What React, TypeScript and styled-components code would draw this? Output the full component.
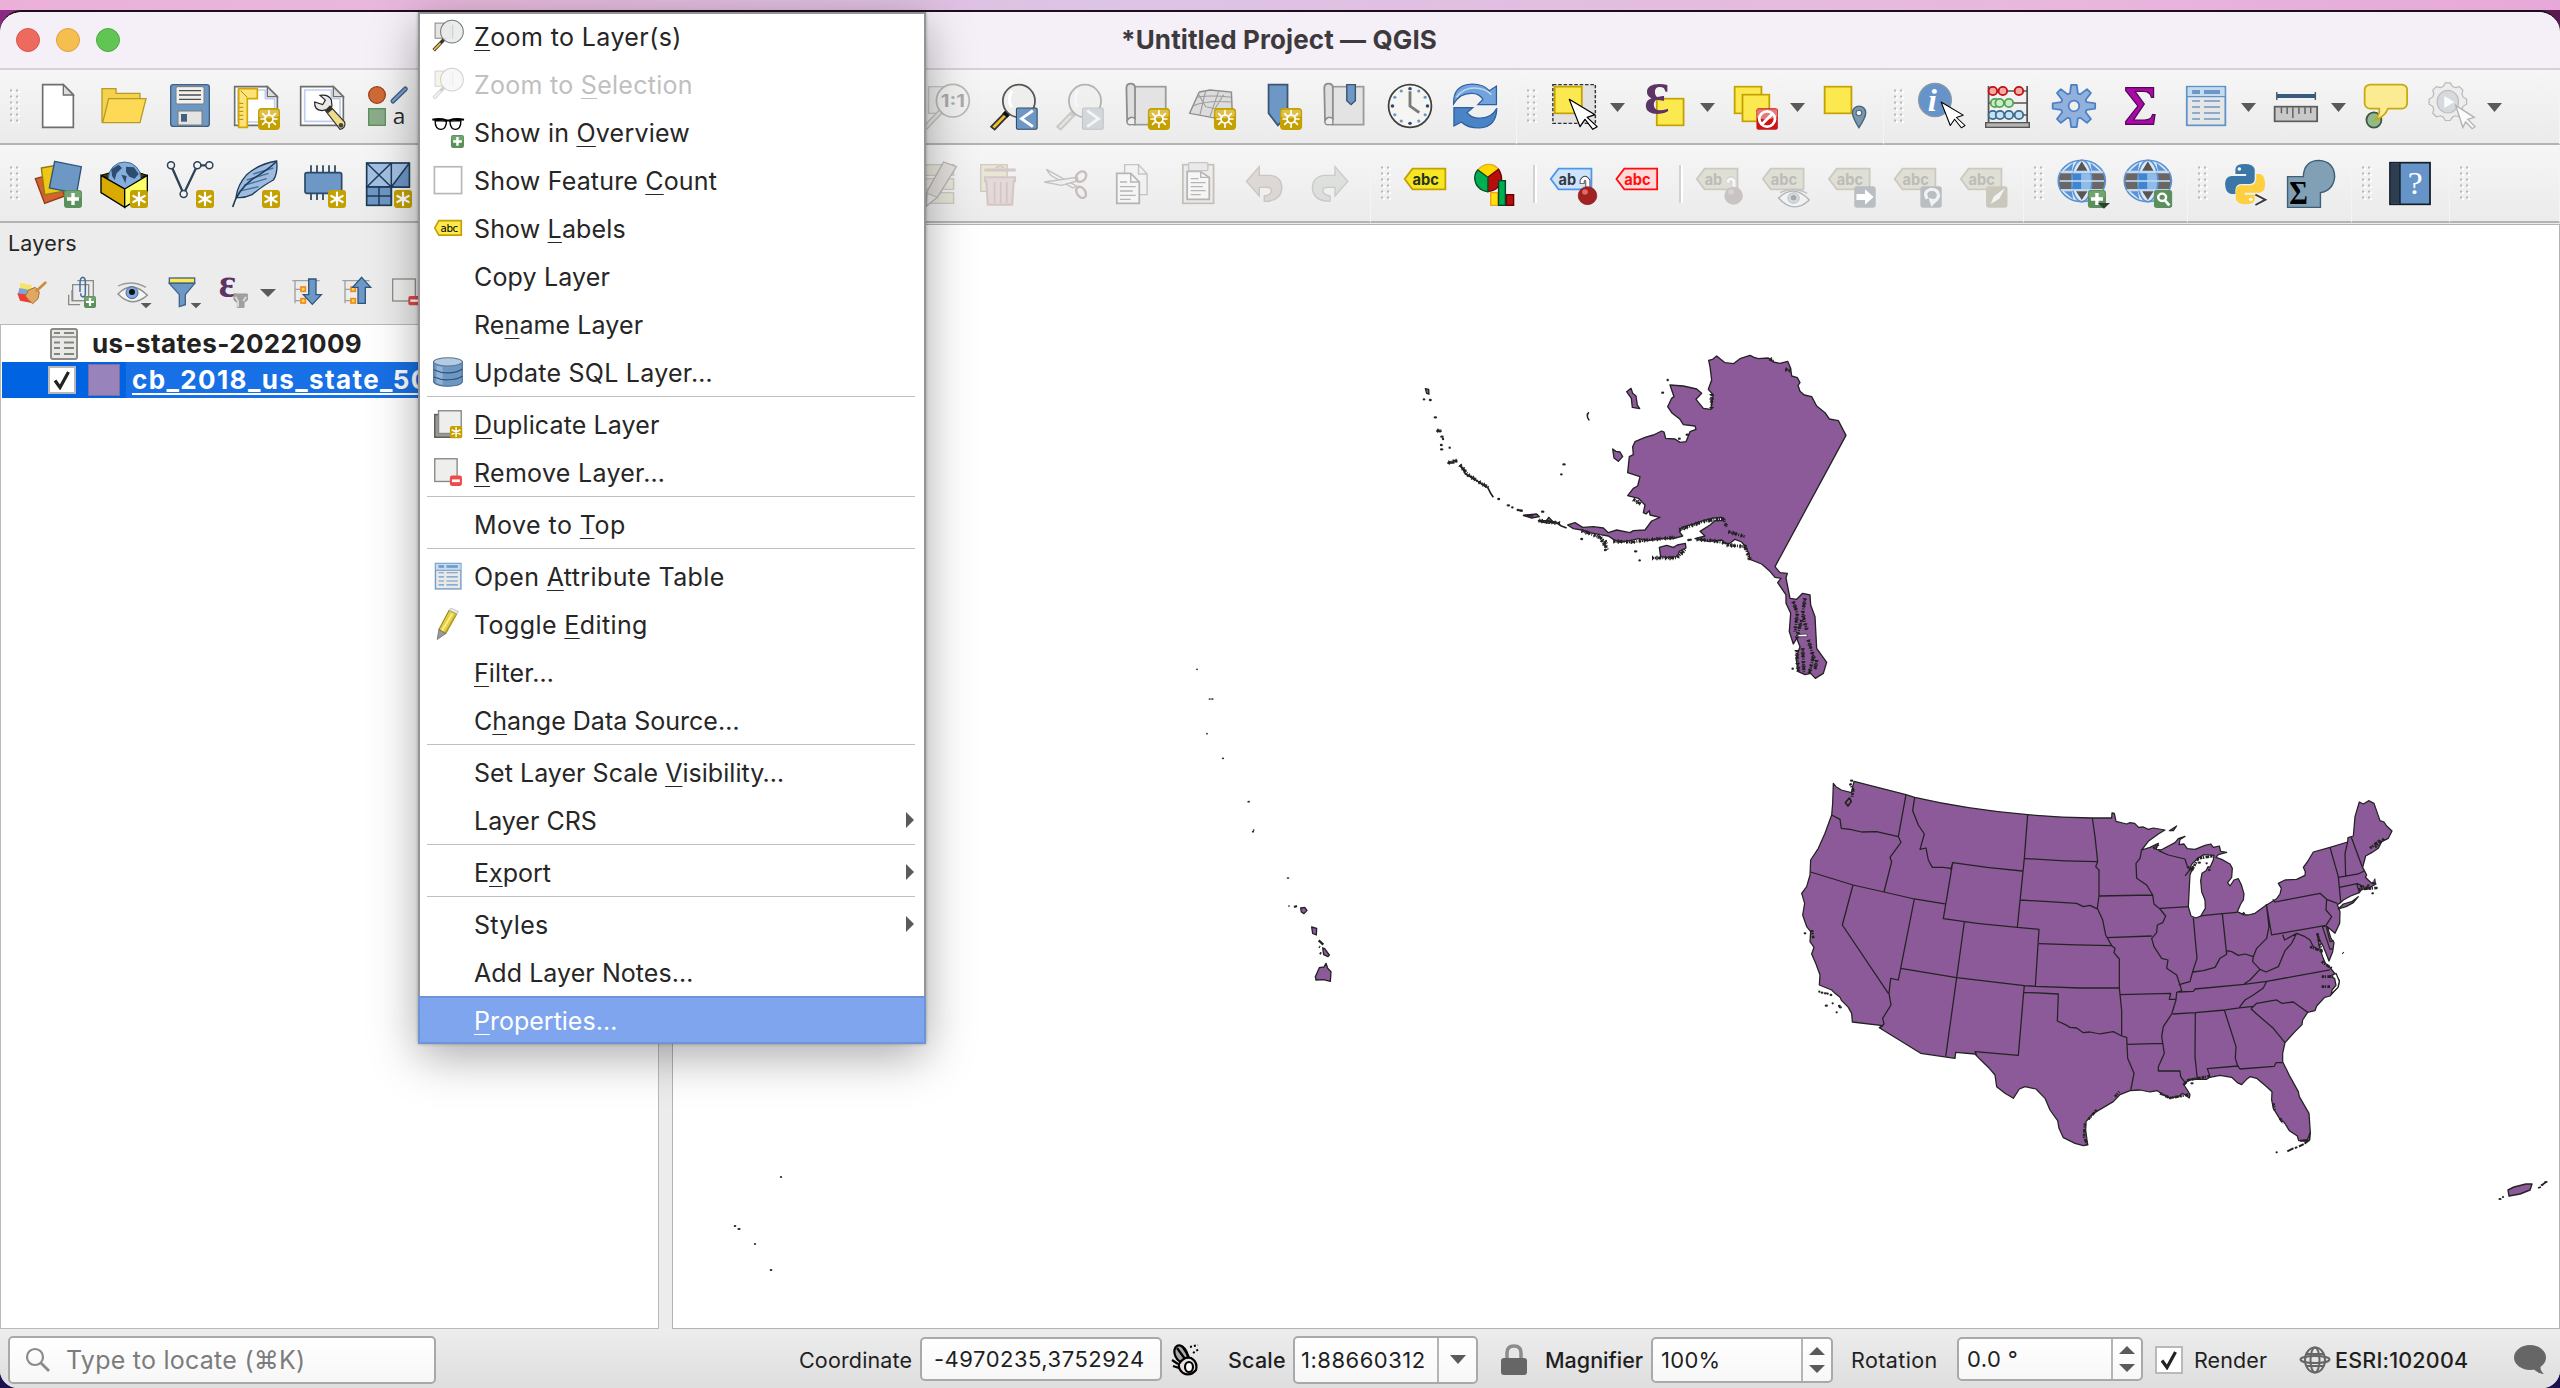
import React from "react";
import styled, { createGlobalStyle } from "styled-components";

const Global = createGlobalStyle`
  html, body { margin: 0; padding: 0; overflow: hidden; }
  body {
    width: 2560px; height: 1388px;
    font-family: Inter, "Liberation Sans", sans-serif;
    color: #262626;
  }
  * { box-sizing: border-box; }
  svg { display: block; }
`;

/* ---------- frame ---------- */

const Desktop = styled.div`
  position: relative;
  width: 2560px;
  height: 1388px;
  overflow: hidden;
  display: flex;
  flex-direction: column;
  padding-top: 10px;
  background:
    linear-gradient(90deg, #ebb0d8 0, #e6b9dc 500px, #dcc4e4 1100px, #e8b8de 2000px, #e6a8d8 100%) 0 0 / 100% 10px no-repeat,
    linear-gradient(90deg, #8a2a82, #5a1c50) 0 0 / 100% 60% no-repeat,
    #1a1250;
`;

const Window = styled.div`
  flex: 1;
  display: flex;
  flex-direction: column;
  border-top: 2px solid #1e0e1c;
  border-radius: 22px 22px 18px 18px;
  overflow: hidden;
  background: #ececec;
`;

const TitleBar = styled.header`
  height: 58px;
  display: flex;
  align-items: center;
  padding-left: 16px;
  background: #f5eff7;
  border-bottom: 2px solid #d5d2d6;
  border-radius: 20px 20px 0 0;
`;

const Light = styled.span<{ $fill: string; $rim: string }>`
  width: 24px;
  height: 24px;
  margin-right: 16px;
  border-radius: 50%;
  background: ${(p) => p.$fill};
  border: 1px solid ${(p) => p.$rim};
`;

const Title = styled.h1`
  margin: 0 138px 2px 0;
  flex: 1;
  text-align: center;
  font-size: 26px;
  font-weight: 700;
  letter-spacing: 0.1px;
  color: #3d3a3e;
`;

/* ---------- toolbars ---------- */

const Bar = styled.div<{ $h: number; $pad: number }>`
  height: ${(p) => p.$h}px;
  display: flex;
  & > * { padding-top: ${(p) => p.$pad}px; }
`;

const Section = styled.div<{ $w: number }>`
  width: ${(p) => p.$w}px;
  flex: none;
  display: flex;
  align-items: center;
  background: linear-gradient(#f6f6f6, #ebebeb);
  border-bottom: 2px solid #b3b3b3;
  border-right: 1px solid #f4f4f4;
`;

const Slot = styled.span`
  width: 66px;
  flex: none;
  display: flex;
  justify-content: center;
`;

const Overflow = styled.span<{ $w: number }>`
  width: ${(p) => p.$w}px;
  flex: none;
`;

const CaretBox = styled.span<{ $w?: number }>`
  width: ${(p) => p.$w ?? 24}px;
  flex: none;
  display: flex;
`;

const Divider = styled.span`
  width: 4px;
  height: 38px;
  margin: 0 5px;
  flex: none;
  border-left: 2px solid #d2d2d2;
  border-right: 2px solid #fff;
`;

const GripBox = styled.span`
  width: 25px;
  flex: none;
  padding-left: 10px;
`;

const Grip = () => (
  <GripBox>
    <svg width="12" height="36">
      {[0, 1, 2, 3, 4, 5].map((r) =>
        [0, 6].map((x) => (
          <g key={`${r}-${x}`}>
            <rect x={x + 2} y={r * 6 + 2} width="2" height="2" fill="#fff" />
            <rect x={x} y={r * 6 + 0.5} width="2" height="2" fill="#b8b8b8" />
          </g>
        ))
      )}
    </svg>
  </GripBox>
);

const Caret = ({ w }: { w?: number }) => (
  <CaretBox $w={w}>
    <svg width="18" height="9">
      <path d="M2 0H17L9.500 9Z" fill="#5a5a58" />
    </svg>
  </CaretBox>
);

type Sheet = "a" | "b" | "c" | "d";
const sheets: Record<Sheet, [number, number]> = {
  a: [0, 3],
  b: [920, 2.8],
  c: [1460, 2.8],
  d: [2000, 2.8],
};

/* One 48px toolbar glyph; artwork is drawn on a shared sheet and windowed by viewBox. */
const Glyph = ({ x, row, s, dim, children }: { x: number; row: 1 | 2; s: Sheet; dim?: number; children: React.ReactNode }) => {
  const [o, k] = sheets[s];
  const top = s === "a" ? (row === 1 ? 249 : 480) : row === 1 ? 69 : 300;
  return (
    <Slot>
      <svg
        width="48"
        height="48"
        overflow="visible"
        opacity={dim ?? 1}
        viewBox={`${(x - 24 - o) * k} ${top} ${48 * k} 144`}
        preserveAspectRatio="none"
      >
        {children}
      </svg>
    </Slot>
  );
};

const Star = ({ x, y, s = 54 }: { x: number; y: number; s?: number }) => (
  <g transform={`translate(${x} ${y}) scale(${s / 54})`}>
    <rect width="54" height="54" rx="9" fill="#c4a000" />
    <g stroke="#fff" strokeWidth="6.5" strokeLinecap="round">
      <path d="M27 8V46M10 18L44 36M44 18L10 36" />
    </g>
  </g>
);

const Sun = ({ x, y, w = 62 }: { x: number; y: number; w?: number }) => (
  <g transform={`translate(${x} ${y}) scale(${w / 66} 1)`}>
    <rect width="66" height="66" rx="11" fill="#c4a000" />
    <path d="M4 12Q4 5 12 5H54Q62 5 62 12V24Q33 36 4 26Z" fill="#dcc04a" />
    <g stroke="#fff" strokeWidth="5" strokeLinecap="round">
      <path d="M33 8V20M33 46V58M9 33H20M46 33H57M14 17L23 26M43 40L52 49M52 17L43 26M23 40L14 49" />
    </g>
    <circle cx="33" cy="33" r="12" fill="none" stroke="#fff" strokeWidth="5" />
  </g>
);

const Plus = ({ x, y, s = 54 }: { x: number; y: number; s?: number }) => (
  <g transform={`translate(${x} ${y}) scale(${s / 54})`}>
    <rect width="54" height="54" rx="9" fill="#5b8f5b" />
    <rect x="3" y="3" width="48" height="22" rx="7" fill="#72a472" />
    <path d="M27 9V45M9 27H45" stroke="#fff" strokeWidth="10" />
  </g>
);

const Pointer = ({ x, y }: { x: number; y: number }) => (
  <path
    transform={`translate(${x} ${y})`}
    d="M0 0L72 46L50 54L78 82L66 90L44 60L30 82Z"
    fill="#fff"
    stroke="#000"
    strokeWidth="3.5"
    strokeLinejoin="round"
  />
);

const Tag = ({ x, text, fill, edge, ink }: { x: number; text: string; fill: string; edge: string; ink: string }) => (
  <g>
    <path d={`M${x + 2} 357L${x + 24} 326H${x + 116}V388H${x + 24}Z`} fill={fill} stroke={edge} strokeWidth="5" />
    <text x={x + 24} y="374" fontSize="46" fontWeight="700" fill={ink} textLength={text.length * 24.6} lengthAdjust="spacingAndGlyphs" fontFamily="Inter, sans-serif">
      {text}
    </text>
  </g>
);

const Globe = ({ c }: { c: number }) => (
  <g>
    <ellipse cx={c} cy="363" rx="66" ry="62" fill="#dce8f5" />
    <path d={`M${c - 62} 340H${c - 28}V388H${c - 62}Q${c - 68} 363 ${c - 62} 340Z M${c + 28} 340H${c + 62}Q${c + 68} 363 ${c + 62} 388H${c + 28}Z`} fill="#6a6664" />
    <path d={`M${c - 26} 340H${c + 26}V388H${c - 26}Z`} fill="#3f86d0" />
    <path d={`M${c - 2} 340H${c + 26}V388H${c - 2}Z`} fill="#8fbbe8" />
    <path d={`M${c - 16} 332L${c} 304L${c + 16} 332Z M${c - 16} 394L${c} 420L${c + 16} 394Z`} fill="#5a5654" />
    <path d={`M${c - 50} 332L${c - 24} 308L${c - 28} 332Z M${c + 50} 332L${c + 24} 308L${c + 28} 332Z M${c - 50} 394L${c - 24} 418L${c - 28} 394Z`} fill="#5a94d6" />
    <g fill="none" stroke="#5b93d4" strokeWidth="4.5">
      <ellipse cx={c} cy="363" rx="66" ry="62" />
      <ellipse cx={c} cy="363" rx="28" ry="62" />
    </g>
    <g fill="none" stroke="#eef5fc" strokeWidth="5">
      <path d={`M${c - 60} 336H${c + 60}M${c - 62} 363H${c + 62}M${c - 58} 390H${c + 58}`} />
    </g>
    <g fill="none" stroke="#7fabdf" strokeWidth="2">
      <path d={`M${c - 60} 336H${c + 60}M${c - 62} 363H${c + 62}M${c - 58} 390H${c + 58}`} />
    </g>
  </g>
);

const Lens = ({ x, grey }: { x: number; grey?: boolean }) => (
  <g transform={`translate(${x} 0)`}>
    <path d="M46 154L4 200L14 209L54 164Z" fill={grey ? "#d8d4c4" : "#f3bf2f"} stroke={grey ? "#8f8f8f" : "#333"} strokeWidth="5" />
    <path d="M40 156L54 168" stroke={grey ? "#999" : "#111"} strokeWidth="14" />
    <ellipse cx="82" cy="123" rx="45" ry="49" fill="#eeeeec" stroke="#555753" strokeWidth="5" />
    <path d="M62 92Q48 120 62 142" stroke="#fff" strokeWidth="8" fill="none" />
  </g>
);

/* ---------- toolbar artwork ---------- */

const RowOneLeft = () => (
  <>
    <Glyph x={58} row={1} s="a">
      <path d="M128 254H190L220 284V382H128Z" fill="#fff" stroke="#6e6e6e" strokeWidth="5" />
      <path d="M190 254V285H220Z" fill="#ddd" stroke="#6e6e6e" strokeWidth="4" />
    </Glyph>
    <Glyph x={124} row={1} s="a">
      <path d="M306 368V266H348V280H420V310" fill="#f6d24a" stroke="#b59a2c" strokeWidth="4" />
      <path d="M308 368L326 296H438L420 368Z" fill="#fdd955" stroke="#b59a2c" strokeWidth="4" />
    </Glyph>
    <Glyph x={190} row={1} s="a">
      <rect x="512" y="254" width="116" height="125" rx="8" fill="#6d97c4" stroke="#41607f" strokeWidth="4" />
      <rect x="528" y="260" width="84" height="52" rx="5" fill="#f1f1ef" stroke="#7a7a78" strokeWidth="3" />
      <path d="M537 272H603M537 285H603M537 298H603" stroke="#4e4e4c" strokeWidth="4" />
      <rect x="534" y="333" width="72" height="42" fill="#e4e4e2" stroke="#7a7a78" strokeWidth="3" />
      <rect x="543" y="342" width="18" height="23" fill="#41607f" />
    </Glyph>
    <Glyph x={256} row={1} s="a">
      <path d="M704 260H802L832 290V376H704Z" fill="#fff" stroke="#6e6e6e" strokeWidth="5" />
      <path d="M714 270H796V296H824V366H714Z" fill="none" stroke="#bdcff0" strokeWidth="5" />
      <path d="M802 260V290H832Z" fill="#ddd" stroke="#6e6e6e" strokeWidth="4" />
      <path d="M716 266H772V296H742V382H716Z" fill="#fbe37a" stroke="#d3a600" strokeWidth="5" />
      <path d="M718 310H730M718 322H730M718 334H730M718 346H730M718 358H730M722 272L742 292" stroke="#b08a00" strokeWidth="3" />
      <Sun x={774} y={324} w={66} />
    </Glyph>
    <Glyph x={322} row={1} s="a">
      <path d="M902 260H1000L1030 290V376H902Z" fill="#fff" stroke="#6e6e6e" strokeWidth="5" />
      <path d="M914 270H994V296H1020V364H914Z" fill="none" stroke="#bdcff0" strokeWidth="5" />
      <path d="M1000 260V290H1030Z" fill="#ddd" stroke="#6e6e6e" strokeWidth="4" />
      <path d="M960 286L976 300L968 314L944 306Q942 330 966 332L984 328L996 318L994 300Q986 282 960 286Z" fill="#e8e8e6" stroke="#222" strokeWidth="3.5" />
      <path d="M976 332L990 318L1034 366Q1038 384 1020 388Z" fill="#efdc8a" stroke="#333" strokeWidth="3.5" />
      <path d="M976 332L990 318L998 328L984 340Z" fill="#333" />
      <circle cx="1023" cy="376" r="7" fill="#444" />
    </Glyph>
    <Glyph x={388} row={1} s="a">
      <circle cx="1131" cy="285" r="25" fill="#cf6a36" stroke="#9c4318" strokeWidth="4" />
      <path d="M1179 303L1216 267" stroke="#3f6288" strokeWidth="15" strokeLinecap="round" />
      <path d="M1179 303L1216 267" stroke="#7ba0cc" strokeWidth="7" strokeLinecap="round" />
      <rect x="1106" y="326" width="50" height="50" fill="#8aac8a" stroke="#5c915c" strokeWidth="4" />
      <text x="1178" y="372" fontSize="68" fill="#2c2c2c" fontFamily="'Open Sans', sans-serif">a</text>
    </Glyph>
  </>
);

const RowOneView = () => (
  <>
    <Glyph x={948} row={1} s="b" dim={0.4}>
      <rect x="24" y="80" width="70" height="80" fill="#e4e4e2" stroke="#888" strokeWidth="4" />
      <path d="M60 152L14 204" stroke="#777" strokeWidth="16" />
      <path d="M60 152L14 204" stroke="#d8d4c4" strokeWidth="8" />
      <ellipse cx="92" cy="122" rx="46" ry="49" fill="#f2f2f0" stroke="#666" strokeWidth="5" />
      <text x="58" y="140" fontSize="50" fontWeight="700" fill="#444" textLength="68" lengthAdjust="spacingAndGlyphs">1:1</text>
    </Glyph>
    <Glyph x={1014} row={1} s="b">
      <Lens x={195} />
      <rect x="270" y="144" width="58" height="64" rx="4" fill="#6d97c4" stroke="#34485e" strokeWidth="3" />
      <path d="M316 152L284 176L316 200" fill="none" stroke="#fff" strokeWidth="8" />
    </Glyph>
    <Glyph x={1080} row={1} s="b" dim={0.4}>
      <Lens x={380} grey />
      <rect x="455" y="144" width="58" height="64" rx="4" fill="#a9b4c0" stroke="#7b8794" strokeWidth="3" />
      <path d="M468 152L500 176L468 200" fill="none" stroke="#fff" strokeWidth="8" />
    </Glyph>
    <Glyph x={1146} row={1} s="b">
      <rect x="600" y="80" width="88" height="114" fill="#e3e3e3" stroke="#9a9a9a" strokeWidth="5" />
      <path d="M578 84Q578 71 590 71Q602 71 602 84V176Q590 168 580 180Z" fill="#dedede" stroke="#8d8d8d" strokeWidth="5" />
      <path d="M580 182Q588 166 602 176V194H592Q578 196 580 182Z" fill="#eee" stroke="#8d8d8d" strokeWidth="4" />
      <Sun x={638} y={144} />
    </Glyph>
    <Glyph x={1212} row={1} s="b">
      <path d="M782 96L812 90L872 96L874 150L834 176L755 160L770 124Z" fill="#dcdcdc" stroke="#8d8d8d" strokeWidth="4" />
      <path d="M764 138Q800 120 874 126M776 112Q810 104 872 112M800 92L784 164M836 94L812 170M778 100L800 140L826 146L850 104" fill="none" stroke="#9b9b9b" strokeWidth="3" />
      <Sun x={823} y={144} />
    </Glyph>
    <Glyph x={1278} row={1} s="b">
      <path d="M976 74H1029V168L1002 196L976 160Z" fill="#6d97c4" stroke="#3b5673" strokeWidth="5" />
      <Sun x={1008} y={144} />
    </Glyph>
    <Glyph x={1344} row={1} s="b">
      <rect x="1154" y="80" width="88" height="114" fill="#e3e3e3" stroke="#9a9a9a" strokeWidth="5" />
      <path d="M1132 84Q1132 71 1144 71Q1156 71 1156 84V176Q1144 168 1134 180Z" fill="#dedede" stroke="#8d8d8d" strokeWidth="5" />
      <path d="M1134 182Q1142 166 1156 176V194H1146Q1132 196 1134 182Z" fill="#eee" stroke="#8d8d8d" strokeWidth="4" />
      <path d="M1195 74H1219V122L1207 134L1195 122Z" fill="#6d97c4" stroke="#3b5673" strokeWidth="4" />
    </Glyph>
    <Glyph x={1410} row={1} s="b">
      <ellipse cx="1372" cy="138" rx="60" ry="64" fill="#f5f5f3" stroke="#3f3f3d" strokeWidth="5" />
      {Array.from({ length: 12 }, (_, i) => (
        <circle key={i} cx={1372 + 49 * Math.sin((i * Math.PI) / 6)} cy={138 - 52 * Math.cos((i * Math.PI) / 6)} r={i % 3 ? 4.5 : 5} fill={i % 3 ? "#6d97c4" : "#2f4b69"} />
      ))}
      <path d="M1372 94V138L1398 158" fill="none" stroke="#7b7b79" strokeWidth="8" />
    </Glyph>
    <Glyph x={1476} row={1} s="c">
      <path d="M-18 132Q-20 74 34 72Q66 72 82 92L102 78V134H50L64 118Q54 100 34 100Q0 98 -18 132Z" fill="#72a3dc" stroke="#2d5f9e" strokeWidth="3.5" />
      <path d="M103 145Q102 202 54 204Q20 204 4 186L-17 198V143H36L20 158Q32 176 54 174Q88 176 103 145Z" fill="#4a84c6" stroke="#2d5f9e" strokeWidth="3.5" />
      <path d="M-10 112Q8 84 40 84Q70 84 88 104" fill="none" stroke="#bdd6f2" strokeWidth="5" />
    </Glyph>
  </>
);

const RowOneSelect = () => (
  <>
    <Glyph x={1575} row={1} s="c">
      <rect x="260" y="74" width="119" height="116" fill="#e2e2e2" stroke="#333" strokeWidth="4" strokeDasharray="10 5" />
      <rect x="265" y="80" width="76" height="80" fill="#fce94f" stroke="#c4a000" strokeWidth="5" />
      <Pointer x={306} y={118} />
    </Glyph>
    <Caret />
    <Glyph x={1665} row={1} s="c">
      <rect x="551" y="116" width="75" height="80" fill="#fce94f" stroke="#c4a000" strokeWidth="5" />
      <text x="516" y="160" fontSize="184" fontWeight="700" fill="#5c3566" textLength="70" lengthAdjust="spacingAndGlyphs" fontFamily="'Liberation Serif', serif">ε</text>
    </Glyph>
    <Caret />
    <Glyph x={1755} row={1} s="c">
      <rect x="769" y="80" width="75" height="80" fill="#fce94f" stroke="#c4a000" strokeWidth="5" />
      <rect x="791" y="104" width="75" height="80" fill="#fce94f" stroke="#c4a000" strokeWidth="5" />
      <rect x="830" y="145" width="60" height="64" rx="6" fill="#cc1414" />
      <path d="M832 148H888V170Q860 184 832 174Z" fill="#e67a7a" />
      <ellipse cx="860" cy="177" rx="22" ry="23" fill="none" stroke="#fff" strokeWidth="8" />
      <path d="M846 192L874 162" stroke="#fff" strokeWidth="8" />
    </Glyph>
    <Caret />
    <Glyph x={1845} row={1} s="c">
      <rect x="1021" y="80" width="75" height="80" fill="#fce94f" stroke="#c4a000" strokeWidth="5" />
      <path d="M1117 203Q1099 172 1099 158A18 19 0 0 1 1136 158Q1136 172 1117 203Z" fill="#7b97ad" stroke="#49657b" strokeWidth="4" />
      <circle cx="1117" cy="159" r="8" fill="#f2f2f2" stroke="#49657b" strokeWidth="3" />
    </Glyph>
  </>
);

const gearPath = (cx: number, cy: number, rx: number, ry: number, inner: number, teeth = 8) => {
  const pts: string[] = [];
  for (let i = 0; i < teeth; i++) {
    const base = (i * 2 * Math.PI) / teeth;
    [[-0.3, inner], [-0.13, 1], [0.13, 1], [0.3, inner]].forEach(([d, r]) => {
      pts.push(`${(cx + rx * r * Math.sin(base + d)).toFixed(1)},${(cy - ry * r * Math.cos(base + d)).toFixed(1)}`);
    });
  }
  return `M${pts.join("L")}Z`;
};

const Bead = ({ x, y, f, e }: { x: number; y: number; f: string; e: string }) => (
  <ellipse cx={x} cy={y} rx="12" ry="12.5" fill={f} stroke={e} strokeWidth="5" />
);

const RowOneTools = () => (
  <>
    <Glyph x={1942} row={1} s="c">
      <ellipse cx="1330" cy="120" rx="46" ry="50" fill="#6694c8" stroke="#8f98a3" strokeWidth="3.5" />
      <text x="1310" y="152" fontSize="92" fontStyle="italic" fontWeight="700" fill="#fff" fontFamily="'Liberation Serif', serif">i</text>
      <g transform="translate(1347 126) scale(.86)"><Pointer x={0} y={0} /></g>
    </Glyph>
    <Glyph x={2008} row={1} s="d">
      <path d="M-32 78V190M76 78V190M-32 93H76M-32 129H76M-32 165H76" stroke="#555" strokeWidth="5" />
      <Bead x={8} y={93} f="#f7a8a8" e="#c01010" />
      <Bead x={-20} y={93} f="#f7a8a8" e="#c01010" />
      <Bead x={53} y={93} f="#f7a8a8" e="#c01010" />
      <Bead x={-14} y={129} f="#c5efc5" e="#55a055" />
      <Bead x={-1} y={129} f="#c5efc5" e="#55a055" />
      <Bead x={25} y={129} f="#c5efc5" e="#55a055" />
      <Bead x={-20} y={165} f="#c3e2f3" e="#3b6a8c" />
      <Bead x={25} y={165} f="#c3e2f3" e="#3b6a8c" />
      <Bead x={53} y={165} f="#c3e2f3" e="#3b6a8c" />
      <Bead x={0} y={165} f="#c3e2f3" e="#3b6a8c" />
      <rect x="-40" y="188" width="122" height="14" fill="#b5b5b3" stroke="#555" strokeWidth="4" />
    </Glyph>
    <Glyph x={2074} row={1} s="d">
      <path d={gearPath(207, 138, 60, 64, 0.62)} fill="#92b0dc" stroke="#4a80c4" strokeWidth="5" strokeLinejoin="round" />
      <ellipse cx="207" cy="138" rx="15" ry="16" fill="#f0f0f0" stroke="#4a80c4" strokeWidth="5" />
    </Glyph>
    <Glyph x={2140} row={1} s="d">
      <path d="M352 83H430V112H424Q420 94 402 94H378L404 132L374 180H404Q424 180 427 164H434L430 193H352V184L386 138L352 92Z" fill="#a90aa9" stroke="#4f0a50" strokeWidth="3.5" />
    </Glyph>
    <Glyph x={2206} row={1} s="d">
      <rect x="523" y="80" width="108" height="116" fill="#e6e6e6" stroke="#5f93c8" strokeWidth="5" />
      <rect x="526" y="82" width="102" height="26" fill="#c4dcf0" />
      <path d="M523 110H631" stroke="#5f93c8" strokeWidth="4" />
      <path d="M538 96H560M571 96H616" stroke="#6d97c4" strokeWidth="12" />
      <path d="M538 123H560M571 123H616M538 141H560M571 141H616M538 159H560M571 159H616M538 177H560M571 177H616" stroke="#6d97c4" strokeWidth="5" />
    </Glyph>
    <Caret />
    <Glyph x={2296} row={1} s="d">
      <path d="M775 108H883" stroke="#3b5b7d" strokeWidth="12" />
      <path d="M775 96V120M883 96V120" stroke="#3b5b7d" strokeWidth="4" />
      <rect x="769" y="140" width="119" height="44" fill="#c9c9c9" stroke="#5c5c5a" strokeWidth="5" />
      <path d="M788 142V160M804 142V162M820 142V174M837 142V162M854 142V162M870 142V160" stroke="#5c5c5a" strokeWidth="4" />
    </Glyph>
    <Caret />
    <Glyph x={2386} row={1} s="d">
      <ellipse cx="1047" cy="180" rx="21" ry="23" fill="#8dbb8d" stroke="#45543f" strokeWidth="5" />
      <path d="M1036 74H1126Q1140 76 1140 90V128Q1140 144 1126 146H1086Q1078 170 1050 180Q1064 164 1062 146H1036Q1021 144 1021 128V90Q1021 76 1036 74Z" fill="#fbec94" stroke="#c9a912" strokeWidth="5" />
    </Glyph>
    <Glyph x={2452} row={1} s="d" dim={0.75}>
      <path d={gearPath(1254, 125, 53, 57, 0.84)} fill="#ececec" stroke="#a8a8a8" strokeWidth="3.5" />
      <ellipse cx="1254" cy="125" rx="30" ry="34" fill="#cdd3d8" stroke="#aab0b4" strokeWidth="3.5" />
      <path d="M1244 108L1272 126L1244 144Z" fill="#fff" />
      <path d="M1276 136L1328 172L1310 178L1330 200L1322 206L1304 186L1296 202Z" fill="#fff" stroke="#a0a0a0" strokeWidth="4" />
    </Glyph>
    <Caret />
  </>
);

const RowTwoLeft = () => (
  <>
    <Glyph x={58} row={2} s="a">
      <path d="M106 536L168 520L194 588L134 610Z" fill="#d5622f" stroke="#8c3d17" strokeWidth="4" />
      <path d="M124 504L190 492L200 572L134 584Z" fill="#edc713" stroke="#8d7a18" strokeWidth="4" />
      <path d="M164 484L244 500L230 580L148 564Z" fill="#6d97c4" stroke="#2f5478" strokeWidth="4" />
      <Plus x={192} y={570} />
    </Glyph>
    <Glyph x={124} row={2} s="a">
      <path d="M303 526L372 552L442 526L375 505Z" fill="#4a3c00" stroke="#000" strokeWidth="3" />
      <circle cx="374" cy="535" r="49" fill="#86aedb" stroke="#39689c" strokeWidth="3" />
      <path d="M334 508L356 494L366 504L350 520L344 540L336 528ZM378 500L402 502L416 522L404 536L388 530L378 516ZM364 524L380 528L376 550Z" fill="#2d4c72" />
      <path d="M303 526L374 567V622L303 578Z" fill="#d9aa00" stroke="#000" strokeWidth="4" />
      <path d="M374 567L442 526V580L374 622Z" fill="#ffff66" stroke="#000" strokeWidth="4" />
      <Star x={390} y={570} />
    </Glyph>
    <Glyph x={190} row={2} s="a">
      <path d="M513 496L551 582L592 496H628" fill="none" stroke="#2d4257" strokeWidth="7" />
      {[[513, 496], [551, 582], [592, 496], [628, 496]].map(([x, y]) => (
        <circle key={x} cx={x} cy={y} r="10.5" fill="#f4f4f4" stroke="#2d4257" strokeWidth="4.5" />
      ))}
      <Star x={588} y={570} />
    </Glyph>
    <Glyph x={256} row={2} s="a">
      <path d="M708 592Q712 556 740 524Q776 492 830 483Q834 520 820 540Q790 556 756 584Q730 596 708 592Z" fill="#9dbce0" stroke="#1f3b57" strokeWidth="4" />
      <path d="M740 540L806 520M732 556L800 536M760 522L820 504M724 572L776 560" stroke="#44709c" strokeWidth="4" />
      <path d="M698 621Q712 572 756 538Q800 512 828 486" fill="none" stroke="#1f3b57" strokeWidth="5" />
      <Star x={786} y={570} />
    </Glyph>
    <Glyph x={322} row={2} s="a">
      <path d="M933 496V518M951 496V518M969 496V518M987 496V518M1005 496V518M933 580V600M951 580V600M969 580V600" stroke="#263f5a" strokeWidth="5" />
      <rect x="915" y="518" width="110" height="62" rx="6" fill="#6d97c4" stroke="#294869" strokeWidth="5" />
      <Star x={984} y={570} />
    </Glyph>
    <Glyph x={388} row={2} s="a">
      <rect x="1100" y="489" width="128" height="72" fill="#a2c0e4" stroke="#1f3a57" strokeWidth="5" />
      <path d="M1228 489V561H1174Z" fill="#6d97c4" />
      <rect x="1100" y="561" width="74" height="55" fill="#6d97c4" stroke="#1f3a57" strokeWidth="5" />
      <path d="M1228 489V561H1174V616M1174 489V561M1100 489L1174 561M1174 489L1100 561M1228 489L1174 561M1137 561V616M1100 588H1174" fill="none" stroke="#1f3a57" strokeWidth="4.5" />
      <Star x={1182} y={570} />
    </Glyph>
  </>
);

const RowTwoEdit = () => (
  <>
    <Glyph x={934} row={2} s="b" dim={0.42}>
      <path d="M-10 314H94V346H-10ZM-10 356H94V388H-10ZM-10 398H94V430H-10Z" fill="#d9d5b8" stroke="#98957c" strokeWidth="4" />
      <path d="M66 306L102 320L50 410L18 438L18 398Z" fill="#cfc6c0" stroke="#6e6662" strokeWidth="4" />
      <path d="M18 438L20 400L48 412Z" fill="#e9e9e9" stroke="#6e6662" strokeWidth="3" />
    </Glyph>
    <Glyph x={1000} row={2} s="b" dim={0.42}>
      <rect x="170" y="314" width="74" height="80" fill="#dcd6b0" stroke="#a09a78" strokeWidth="4" />
      <path d="M180 330H268" stroke="#b08f8f" strokeWidth="9" />
      <path d="M212 324Q224 314 236 324" fill="none" stroke="#b08f8f" strokeWidth="5" />
      <path d="M182 352H266V364H262L258 434H190L186 364H182Z" fill="#d5bcbc" stroke="#b08f8f" strokeWidth="6" />
      <path d="M209 366V430M226 366V430M243 366V430" stroke="#b08f8f" strokeWidth="5" />
    </Glyph>
    <Glyph x={1066} row={2} s="b" dim={0.45}>
      <path d="M354 328L438 378L428 384L366 346Z" fill="#eee" stroke="#8a8a8a" strokeWidth="4" />
      <path d="M348 366L440 352L442 362L396 376Z" fill="#eee" stroke="#8a8a8a" strokeWidth="4" />
      <ellipse cx="451" cy="350" rx="13" ry="17" fill="none" stroke="#9c7f7f" strokeWidth="7" transform="rotate(35 451 350)" />
      <ellipse cx="451" cy="397" rx="12" ry="18" fill="none" stroke="#9c7f7f" strokeWidth="7" transform="rotate(-30 451 397)" />
    </Glyph>
    <Glyph x={1132} row={2} s="b" dim={0.42}>
      <path d="M573 314H612L636 342V404H573Z" fill="#f4f4f4" stroke="#888" strokeWidth="4" />
      <path d="M612 314V342H636" fill="none" stroke="#888" strokeWidth="4" />
      <path d="M551 340H590L614 366V430H551Z" fill="#fff" stroke="#666" strokeWidth="5" />
      <path d="M590 340V366H614M560 366H580M560 380H604M560 393H596M560 406H604M560 418H590" fill="none" stroke="#666" strokeWidth="4" />
    </Glyph>
    <Glyph x={1198} row={2} s="b" dim={0.42}>
      <rect x="736" y="314" width="86" height="116" fill="#eae6dc" stroke="#8a8070" strokeWidth="5" />
      <path d="M748 334H784L810 352V418H748Z" fill="#fff" stroke="#666" strokeWidth="5" />
      <path d="M786 330V352H810M758 356H780M758 368H800M758 380H792M758 392H800M758 404H786" fill="none" stroke="#666" strokeWidth="4" />
      <rect x="752" y="308" width="54" height="24" rx="4" fill="#ddd" stroke="#888" strokeWidth="4" />
    </Glyph>
    <Glyph x={1264} row={2} s="b" dim={0.42}>
      <path d="M914 364L950 320V346H980Q1014 350 1013 386Q1010 424 964 424V408Q986 404 984 390Q982 380 964 382H950V408Z" fill="#c3b8b0" stroke="#9a8d84" strokeWidth="4" />
    </Glyph>
    <Glyph x={1330} row={2} s="b" dim={0.42}>
      <path d="M1198 364L1162 320V346H1132Q1098 350 1099 386Q1102 424 1148 424V408Q1126 404 1128 390Q1130 380 1148 382H1162V408Z" fill="#c6cac4" stroke="#939a92" strokeWidth="4" />
    </Glyph>
  </>
);

const DimTag = ({ x, text }: { x: number; text: string }) => <Tag x={x} text={text} fill="#e0dfd6" edge="#cbcac0" ink="#bcbcb6" />;

const RowTwoLabels = () => (
  <>
    <Glyph x={1429} row={2} s="b">
      <Tag x={1355} text="abc" fill="#f7e624" edge="#c4a000" ink="#26341f" />
    </Glyph>
    <Glyph x={1495} row={2} s="c">
      <path d="M78 352L50 330Q64 313 80 313Q98 313 108 328Z" fill="#ffd800" stroke="#e8a81c" strokeWidth="4" />
      <path d="M78 352L108 328Q118 345 116 362Q108 392 78 395Z" fill="#b80d0d" stroke="#700" strokeWidth="4" />
      <path d="M78 352V395Q44 390 41 354Q42 338 50 330Z" fill="#00b050" stroke="#08542c" strokeWidth="4" />
      <rect x="86" y="398" width="20" height="38" fill="#ffdf10" stroke="#f0a818" strokeWidth="4" />
      <rect x="130" y="404" width="20" height="32" fill="#b80d0d" stroke="#600" strokeWidth="4" />
      <rect x="108" y="362" width="19" height="74" fill="#00b050" stroke="#08442c" strokeWidth="4" />
    </Glyph>
    <Divider />
    <Glyph x={1575} row={2} s="c">
      <Tag x={252} text="ab" fill="#cfe4fb" edge="#4c97ee" ink="#333b42" />
      <path d="M342 372V362Q350 346 358 362V384" fill="none" stroke="#444" strokeWidth="14" />
      <path d="M342 370V362Q350 348 358 362V384" fill="none" stroke="#fff" strokeWidth="9" />
      <ellipse cx="357" cy="407" rx="26" ry="27" fill="#a22222" stroke="#7d1616" strokeWidth="2" />
      <circle cx="350" cy="396" r="8" fill="#e06a6a" />
    </Glyph>
    <Glyph x={1641} row={2} s="c">
      <Tag x={436} text="abc" fill="#ffd9d9" edge="#ff0d0d" ink="#ff1010" />
    </Glyph>
    <Divider />
    <Glyph x={1721} row={2} s="c">
      <DimTag x={661} text="ab" />
      <path d="M751 370V362Q759 348 767 362V384" fill="none" stroke="#cfcfcf" strokeWidth="14" />
      <path d="M751 368V362Q759 350 767 362V384" fill="none" stroke="#f6f6f6" strokeWidth="9" />
      <ellipse cx="766" cy="407" rx="26" ry="27" fill="#c9c3c3" />
      <circle cx="759" cy="396" r="8" fill="#d8d4d4" />
    </Glyph>
    <Glyph x={1787} row={2} s="c">
      <DimTag x={846} text="abc" />
      <path d="M892 414Q934 370 978 420Q934 464 892 414Z" fill="#f2f2f2" stroke="#b4b4b4" strokeWidth="4" />
      <path d="M896 398Q934 378 972 400" fill="none" stroke="#c0c0c0" strokeWidth="4" />
      <circle cx="934" cy="414" r="16" fill="#d3dae0" stroke="#bcc4ca" strokeWidth="3" />
      <circle cx="934" cy="413" r="8" fill="#a8a8a8" />
    </Glyph>
    <Glyph x={1853} row={2} s="c">
      <DimTag x={1031} text="abc" />
      <rect x="1104" y="379" width="60" height="64" rx="8" fill="#b9bec2" />
      <path d="M1110 402H1134V388L1158 411L1134 434V420H1110Z" fill="#fff" />
    </Glyph>
    <Glyph x={1919} row={2} s="c">
      <DimTag x={1215} text="abc" />
      <rect x="1289" y="379" width="60" height="64" rx="8" fill="#b9bec2" />
      <path d="M1308 416Q1296 394 1318 388Q1340 388 1340 408Q1336 420 1326 424" fill="none" stroke="#f2f2f2" strokeWidth="9" />
      <path d="M1312 414L1338 420L1320 440Z" fill="#f2f2f2" />
    </Glyph>
    <Glyph x={1985} row={2} s="c">
      <DimTag x={1400} text="abc" />
      <rect x="1473" y="379" width="60" height="64" rx="8" fill="#cac7bd" />
      <path d="M1486 432L1494 410L1526 384L1510 416Z" fill="#f4f4f4" />
    </Glyph>
  </>
);

const RowTwoWeb = () => (
  <>
    <Glyph x={2082} row={2} s="d">
      <Globe c={229} />
      <g transform="translate(246 390) scale(.94 1)"><Plus x={0} y={0} /></g>
      <path d="M274 429H308L291 446Z" fill="#2f4030" />
    </Glyph>
    <Glyph x={2148} row={2} s="d">
      <Globe c={414} />
      <rect x="431" y="390" width="51" height="54" rx="8" fill="#5b8f5b" />
      <circle cx="454" cy="412" r="11" fill="none" stroke="#fff" strokeWidth="7" />
      <path d="M461 420L474 436" stroke="#fff" strokeWidth="8" />
    </Glyph>
  </>
);

const RowTwoPlugins = () => (
  <>
    <Glyph x={2247} row={2} s="d">
      <path d="M688 312Q662 312 662 328V342H692V348H650Q634 350 633 372Q634 400 650 402H662V388Q664 372 680 372H702Q716 370 716 356V328Q712 312 688 312Z" fill="#3a76a8" />
      <path d="M690 433Q716 433 716 418V404H688V398H730Q745 396 745 372Q744 344 730 342H720V358Q718 376 702 376H678Q664 378 663 390V418Q668 433 690 433Z" fill="#fecf3f" />
      <circle cx="673" cy="327" r="5" fill="#fff" />
      <circle cx="705" cy="418" r="5" fill="#fff" />
      <path d="M718 404L746 419L718 435" fill="none" stroke="#f3f3f3" strokeWidth="11" />
      <path d="M718 404L746 419L718 435" fill="none" stroke="#3a3a3a" strokeWidth="5.5" />
    </Glyph>
    <Glyph x={2313} row={2} s="d">
      <path d="M808 350H852Q854 302 896 301Q938 304 940 350Q936 392 900 398V442H808Z" fill="#819fb5" stroke="#3f5f78" strokeWidth="4" />
      <text x="813" y="432" fontSize="100" fontWeight="700" fill="#000" textLength="52" lengthAdjust="spacingAndGlyphs" fontFamily="'Liberation Serif', serif">Σ</text>
    </Glyph>
  </>
);

const RowTwoHelp = () => (
  <Glyph x={2410} row={2} s="d">
    <rect x="1092" y="308" width="112" height="125" fill="#6694c8" stroke="#151e28" strokeWidth="5" />
    <rect x="1094" y="310" width="26" height="121" fill="#2c3e50" />
    <path d="M1120 308V433" stroke="#151e28" strokeWidth="4" />
    <text x="1142" y="402" fontSize="94" fill="#fff" fontFamily="'Liberation Serif', serif">?</text>
  </Glyph>
);

/* ---------- layers panel ---------- */

const Body = styled.main`
  height: 1106px;
  display: flex;
`;

const Dock = styled.section`
  width: 659px;
  flex: none;
  display: flex;
  flex-direction: column;
`;

const DockTitle = styled.h2`
  margin: 0;
  height: 42px;
  padding: 5px 0 0 8px;
  font-size: 21.5px;
  line-height: 30px;
  font-weight: 400;
  letter-spacing: 0.2px;
`;

const DockTools = styled.div`
  height: 59px;
  padding: 12px 0 0 16px;
  display: flex;
  align-items: flex-start;
`;

const DockTool = styled.span<{ $gap?: number }>`
  width: 32px;
  margin-right: ${(p) => p.$gap ?? 18}px;
  flex: none;
`;

const LayerIcon = ({ c, gap, children }: { c: number; gap?: number; children: React.ReactNode }) => (
  <DockTool $gap={gap}>
    <svg width="32" height="32" overflow="visible" viewBox={`${c * 3 - 48} 831 96 96`}>
      {children}
    </svg>
  </DockTool>
);

const TreeArrow = ({ x, up }: { x: number; up?: boolean }) => (
  <>
    <path d={`M${x} 842H${x + 82}M${x + 8} 842V910M${x + 8} 868H${x + 24}M${x + 8} 902H${x + 24}`} stroke="#a0a09e" strokeWidth="4" />
    <rect x={x + 26} y="861" width="13" height="13" fill="#ffd95a" stroke="#f08a16" strokeWidth="5" />
    <rect x={x + 26} y="896" width="13" height="13" fill="#ffd95a" stroke="#f08a16" strokeWidth="5" />
    {up ? (
      <path d={`M${x + 58} 832L${x + 85} 862H${x + 69}V910H${x + 47}V862H${x + 31}Z`} fill="#6d97c4" stroke="#2f5680" strokeWidth="4" />
    ) : (
      <path d={`M${x + 49} 837H${x + 71}V884H${x + 87}L${x + 60} 913L${x + 33} 884H${x + 49}Z`} fill="#6d97c4" stroke="#2f5680" strokeWidth="4" />
    )}
  </>
);

const Tree = styled.ul`
  flex: 1;
  margin: 0;
  padding: 1px 0 0 1px;
  list-style: none;
  background: #fff;
  border: 1px solid #b9b9b9;
`;

const TreeRow = styled.li<{ $on?: boolean }>`
  height: 36px;
  display: flex;
  align-items: center;
  background: ${(p) => (p.$on ? "#0063e1" : "#fff")};
`;

const TreeName = styled.span<{ $on?: boolean }>`
  flex: 1;
  height: 36px;
  line-height: 36px;
  padding-left: 6px;
  white-space: nowrap;
  overflow: hidden;
  font-size: 26px;
  font-weight: 700;
  letter-spacing: ${(p) => (p.$on ? "1.4px" : "0.4px")};
  color: ${(p) => (p.$on ? "#fff" : "#222")};
  background: ${(p) => (p.$on ? "#1870e6" : "transparent")};
  text-decoration: ${(p) => (p.$on ? "underline" : "none")};
  text-decoration-thickness: 2px;
  text-underline-offset: 4px;
  text-decoration-skip-ink: none;
`;

const CheckBox = styled.span<{ $ml?: number }>`
  width: 28px;
  height: 28px;
  flex: none;
  margin-left: ${(p) => p.$ml ?? 0}px;
  display: flex;
  align-items: center;
  justify-content: center;
  background: #fff;
  border: 2px solid #b9b9b9;
`;

const Swatch = styled.span`
  width: 32px;
  height: 32px;
  margin: 0 6px 0 12px;
  background: #9983bb;
  border: 1px solid #7f6ca0;
`;

const TableMark = styled.span`
  margin: 0 8px 0 48px;
`;

const Check = () => (
  <svg width="18" height="20" viewBox="0 0 18 20">
    <path d="M2 10.5L7 17.5L15.5 2" fill="none" stroke="#222" strokeWidth="3.2" />
  </svg>
);

/* ---------- map ---------- */

const Splitter = styled.div`
  width: 13px;
  flex: none;
`;

const Canvas = styled.section`
  flex: 1;
  margin-top: 1px;
  background: #fff;
  border: 1px solid #b3b3b3;
`;

const ALASKA =
  "M926 91L938 88L950 78L962 88L975 98L1000 101L1020 86L1050 76L1062 82L1075 86L1105 84L1120 96L1140 100L1163 94L1172 115L1175 138L1192 143L1200 158L1194 166L1200 184L1213 195L1235 200L1250 228L1275 248L1288 267L1315 272L1338 316L1125 710L1140 728L1162 730L1158 744L1170 805L1190 808L1208 790L1230 795L1232 825L1245 860L1250 955L1280 997L1270 1030L1246 1045L1232 1030L1215 1034L1195 1025L1188 985L1200 950L1190 925L1180 942L1168 905L1172 850L1158 820L1158 795L1133 758L1143 745L1125 742L1108 722L1085 702L1050 688L1046 670L1036 650L1025 636L1005 628L990 640L975 640L965 630L950 632L925 634L885 626L915 618L900 604L930 585L945 572L970 572L965 562L940 564L910 572L880 582L845 592L838 605L848 618L820 626L780 626L745 632L715 626L690 632L660 636L640 628L625 618L600 614L570 608L545 600L520 596L503 585L525 578L548 592L580 590L610 594L625 608L650 600L690 608L700 602L735 600L755 573L780 562L750 555L748 542L738 552L730 548L735 525L715 505L683 497L700 475L713 468L720 440L683 428L688 380L700 374L698 350L705 335L735 322L760 315L785 303L792 306L797 325L825 327L840 337L858 335L870 305L888 298L885 288L850 284L840 268L815 248L803 230L815 205L822 200L810 165L850 168L890 177L905 190L888 208L910 235L933 238L936 210L940 195L925 178L935 150L930 110Z";

const ALASKA_ISLES =
  "M680 185L693 175L698 190L708 198L712 225L719 236L697 232L694 205ZM638 357L648 364L660 366L668 380L655 394L642 384ZM76 176L86 178L87 192L80 190ZM566 248Q558 258 567 270Q560 262 562 252ZM778 652L800 646L820 652L832 645L856 640L858 654L838 664L832 680L800 682L782 680ZM370 556L410 552L418 560L395 564ZM415 572L440 572L446 562L456 572L448 580L425 576Z";

const ALASKA_CHAIN = "M180 405L190 418L196 432L215 442L235 455L262 472M262 470L272 490L280 502M370 556L400 558M440 572L470 578L484 588L500 594M352 540L368 542";

const ALASKA_NOISE =
  "M180 405L205 435L235 455L268 474M545 602L600 622L622 640M640 634L700 636L740 630L830 622M890 628L940 632L980 640M985 605L1035 620M980 645L1035 650L1050 690M756 684L830 684L856 658M480 580L416 572M1180 815L1192 850L1185 905M1215 805L1208 850L1220 900M1205 870L1190 925M1190 960L1195 1025M1208 955L1212 1030M1225 930L1240 980L1228 1030M1250 990L1245 1020M605 630L625 662M935 192V236M838 600L910 574L970 566L980 590M700 508L722 522M112 302H124M146 398L172 392M1156 118L1172 122M1110 86L1120 94";

const alaskaDots: [number, number][] = [
  [72, 208], [91, 210], [106, 262], [112, 303], [120, 304], [126, 320], [129, 327], [124, 345], [125, 358], [149, 353], [146, 399], [156, 398], [168, 392],
  [296, 507], [325, 526], [337, 532], [354, 540], [363, 542], [803, 150], [788, 188], [492, 403], [484, 433], [545, 627], [707, 664], [719, 691],
  [616, 660], [428, 545], [872, 629], [838, 326], [862, 314], [1178, 1016], [866, 630],
];

const STATES_OUTLINE =
  "M160 70L168 80L184 90L214 98L218 82L222 64L378 104L404 112Q560 148 743 164Q840 172 937 174L995 174L996 159L1003 160L1008 184L1040 192L1050 188L1064 190L1076 202L1090 201L1105 208L1120 204L1155 210L1135 222L1105 244L1085 270L1110 262L1135 250L1128 268L1143 270L1185 248L1195 236L1215 229L1200 238L1197 254L1212 252L1222 266L1245 268L1275 256L1292 252L1300 262L1318 258L1322 274L1340 277L1315 284L1308 292L1325 298L1350 312L1357 325L1355 352L1343 368L1350 378L1362 360L1375 356L1384 374L1392 402L1390 420L1382 432L1372 455L1390 464L1405 465L1425 460L1455 438L1490 416L1500 402L1504 385L1495 370L1515 360L1550 358L1575 346L1576 335L1570 322L1582 306L1600 276L1650 262L1703 246L1704 233L1720 228L1725 170L1738 126L1750 132L1766 122L1782 130L1800 182L1812 186L1820 198L1836 213L1825 235L1805 245L1795 265L1775 278L1757 288L1748 322L1760 345L1756 352L1775 370L1788 372L1765 385L1745 388L1738 398L1712 408L1690 420L1682 428L1672 434L1680 455L1679 490L1665 520L1642 500L1653 535L1662 548L1658 575L1647 603L1638 580L1630 560L1618 538L1612 520L1618 560L1628 590L1636 610L1650 622L1665 642L1678 662L1675 680L1650 708L1634 712L1610 738L1605 752L1583 757L1568 780L1566 794L1545 815L1515 848L1508 880V905L1530 950L1555 995L1558 1010L1587 1060L1591 1118L1580 1144L1556 1142L1552 1128L1528 1112L1512 1086L1504 1084L1480 1045L1475 1020L1476 995L1460 980L1430 955L1410 950L1400 958L1385 974L1372 968L1355 952L1320 946L1290 952L1280 958L1250 957L1225 960L1212 975L1222 990L1230 1004L1228 1014L1208 1000L1195 1010L1168 1014L1150 1004L1132 992L1110 996L1080 990L1050 992L1020 1004L1000 1025L940 1060L918 1085L917 1110L923 1155L910 1157L885 1150L850 1133L837 1105L833 1082L810 1050L795 1015L768 987L735 980L718 987L700 1015L675 1000L650 980L645 945L628 925L600 898L585 882L527 877L525 895L422 880L298 803L308 797L217 786L215 760L205 742L185 722L180 712L165 700L155 690L118 675L120 645L108 612L95 582L102 562L90 545L92 515L80 500L68 465L74 430L65 400L80 380L90 345L92 300L115 265L135 220L155 165L158 130Z";

const STATE_LINES =
  "M155 165L180 178L184 205L210 208L245 216L290 215L355 230M378 104L355 230L363 247L330 292L335 305L312 396M92 336L219 375L312 396L403 417L495 432M219 375L187 495L325 700M403 417L362 625L355 660L332 655L327 700L333 735L308 775L312 792L300 803M362 625L530 653L733 677L766 679L900 684L1018 684M404 112L398 152L415 195L433 222L420 268L438 264L445 300L457 322L490 322L512 325M512 330L518 308Q620 324 727 333M518 308L490 476Q600 494 712 502L777 508L766 679M553 486L530 653L497 890M743 164L733 295L712 502M733 295Q840 304 953 305M722 420L890 430L910 440L930 436L955 448M937 174L945 230L953 305L947 320L957 330V408L952 445L968 480L977 525L995 557L1005 565L1002 578L1018 597V684L1025 752V828M777 551Q890 556 995 557M957 408L1118 405M980 533L1115 528M1085 268L1080 295L1068 310L1070 355L1100 375L1118 405L1122 432L1140 447L1157 468L1148 488L1132 495L1130 518L1115 535L1122 560L1145 595L1164 600L1160 625L1190 645L1200 675L1205 692L1190 697L1188 720L1175 762L1150 800L1145 830L1153 880L1135 920V933H1200L1202 950L1218 972M1140 445L1228 440M1136 272L1165 285L1215 297L1222 320M1240 474L1251 595L1238 635L1230 665L1210 670L1196 675M1245 471L1275 466L1327 461L1372 457M1327 461L1340 583M1238 636L1270 632L1305 622L1320 595L1340 583V572L1355 575L1375 586L1395 582L1420 590L1430 565L1460 535L1467 500L1459 432M1420 590L1418 605L1440 628L1410 660L1392 672M1196 696L1240 694L1245 687L1392 673L1460 664L1650 630M1020 704L1172 700L1168 718H1188M1178 762L1246 758L1335 750L1378 744L1420 739M1460 664L1450 684L1420 705L1395 720L1378 742M1413 746L1430 730L1490 720L1505 730L1540 726L1583 757M1413 746L1430 762L1480 805L1515 848M1246 758L1245 890L1252 957M1333 750L1368 860L1366 895L1373 918L1282 926L1290 950M1373 917L1380 927L1483 919L1488 908L1508 908M1043 853L1147 850M1025 828L1040 832L1043 895L1062 940L1052 992M731 697L835 702L832 783L856 794L870 802L890 804L910 818L930 816L960 822L1000 815L1025 828M733 677L731 697L715 886L585 875L590 886M1459 432L1475 525L1638 496M1478 418L1485 426L1620 400L1640 418L1672 430M1640 418L1638 450L1655 470L1638 496L1650 545L1662 543M1638 496L1628 502L1650 568L1658 566M1508 524L1514 540L1550 520L1575 530L1590 540L1600 560L1618 570M1440 628L1458 636L1495 620L1515 572L1535 550L1550 520M1650 262L1675 350L1682 425M1703 246L1695 280L1697 347M1714 232L1747 322M1675 352L1735 342L1752 333M1678 382L1732 371L1750 380M1730 371L1738 398";

const US_NOISE =
  "M210 70L220 90L216 110M96 510L100 535M1770 265L1800 240M1785 262L1812 236M1740 378L1770 385M1735 388L1790 384M1612 520L1626 580M1625 605L1655 625M1625 650H1660M1625 680H1650M1210 975L1225 960L1290 948M1140 1000L1170 1014L1225 1004M915 1090L912 1130L922 1155M925 1078L950 1050M1480 1030L1484 1050M1500 1075L1510 1090M1222 320L1236 330L1255 295L1300 288M1388 458L1396 465M1005 1010L1018 995M1690 580L1688 578M1590 560L1622 572M1120 266L1136 254";

const usDots: [number, number][] = [
  [118, 695], [126, 698], [136, 700], [143, 701], [153, 705], [139, 737], [158, 730], [178, 738], [181, 742], [170, 757], [75, 520], [215, 62],
  [1790, 384], [1778, 400], [1236, 970], [1490, 1177], [1765, 376], [1258, 308], [1280, 310], [1288, 330],
];

const seaDots: [number, number][] = [[781, 1177], [735, 1226], [739, 1229], [755, 1244], [771, 1270], [2500, 1199], [2503, 1197], [2542, 1185], [2546, 1182]];
const hawaiiDots: [number, number][] = [[111, 88], [149, 177], [157, 177], [141, 281], [189, 355], [266, 485], [281, 570], [279, 575], [384, 714], [387, 798]];

const Dots = ({ at, r }: { at: [number, number][]; r: number }) => (
  <g fill="#232323" stroke="none">
    {at.map(([x, y], i) => (
      <ellipse key={i} cx={x} cy={y} rx={r * (1 + (i % 3) * 0.25)} ry={r} />
    ))}
  </g>
);

const MapView = () => (
  <svg width="1885" height="1103" viewBox="673 225 1885 1103" fill="#8d5a99" stroke="#232323" strokeLinejoin="round">
    <g transform="translate(1400 330) scale(.33333)" strokeWidth="4">
      <path d={ALASKA} />
      <path d={ALASKA_ISLES} />
      <path d={ALASKA_CHAIN} fill="none" strokeWidth="5" />
      <path d={ALASKA_NOISE} fill="none" strokeWidth="8" strokeDasharray="7 2 4 4 11 3 3 4" />
      <path d={ALASKA_NOISE} fill="none" strokeWidth="13" strokeDasharray="3 10 4 6 2 14" />
      <path d="M1192 914L1220 912L1222 920L1196 920Z" fill="#fff" strokeWidth="2" />
      <Dots at={alaskaDots} r={3.6} />
    </g>
    <g transform="translate(1780 760) scale(.33333)" strokeWidth="3.8">
      <path d={STATES_OUTLINE} />
      <path d={STATE_LINES} fill="none" />
      <path
        d="M1216 346L1226 334L1236 312L1252 296L1272 284L1302 286L1300 300L1290 322L1284 320L1278 332L1266 340L1262 362L1265 395L1275 420L1276 445L1262 468L1248 474L1233 468L1225 440L1228 380L1230 345L1240 318Z"
        fill="#fff"
      />
      <path d="M1675 447L1690 432L1715 425L1735 410L1720 428L1698 440ZM1168 212L1190 198L1180 212ZM1775 368L1786 370L1784 356" />
      <path d="M1668 640L1678 664L1674 682L1654 702L1656 690L1668 676L1664 656L1650 648Z" fill="#fff" />
      <path d="M196 128L208 114L214 124L204 138Z" fill="none" strokeWidth="5" />
      <path d="M1590 1118L1588 1140L1572 1152L1556 1160L1538 1166L1522 1174M1560 1142L1582 1140" fill="none" strokeWidth="6" strokeDasharray="40 3 16 5 8 4" />
      <path d={US_NOISE} fill="none" strokeWidth="8" strokeDasharray="7 2 4 4 11 3" />
      <Dots at={usDots} r={3.4} />
    </g>
    <g transform="translate(1160 640) scale(.33333)" strokeWidth="4">
      <path d="M422 804L434 802L441 811L432 821L424 816ZM455 861L470 865L469 885L458 880ZM488 924L494 926L508 945L504 950L491 944ZM498 970L503 985L513 995L511 1024L490 1019L468 1020L466 1010L478 983L492 981Z" />
      <path d="M402 801L411 798M476 901L490 914M477 920L480 922M479 939L484 941" strokeWidth="7" />
      <Dots at={hawaiiDots} r={2.6} />
    </g>
    <path d="M2508 1190L2514 1187L2526 1184L2532 1184L2530 1190L2520 1194L2509 1196Z" strokeWidth="1.4" />
    <path d="M2538 1188L2541 1187M2542 1185L2546 1182" strokeWidth="1.6" />
    <Dots at={seaDots} r={1.1} />
  </svg>
);

/* ---------- status bar ---------- */

const Status = styled.footer`
  flex: 1;
  display: flex;
  align-items: center;
  padding: 2px 0 0 8px;
  background: linear-gradient(#ededed, #dedede);
  font-size: 21.5px;
  color: #1f1f1f;
  white-space: nowrap;
`;

const Field = styled.div<{ $w: number; $h: number; $ml?: number; $up?: number }>`
  width: ${(p) => p.$w}px;
  height: ${(p) => p.$h}px;
  margin-left: ${(p) => p.$ml ?? 0}px;
  margin-bottom: ${(p) => p.$up ?? 0}px;
  flex: none;
  display: flex;
  align-items: center;
  background: linear-gradient(#fff, #f7f7f7);
  border: 2px solid #a9a9a9;
  border-radius: 5px;
  overflow: hidden;
`;

const FieldText = styled.span<{ $pl: number; $ls?: number; $size?: number; $muted?: boolean }>`
  flex: 1;
  padding-left: ${(p) => p.$pl}px;
  letter-spacing: ${(p) => p.$ls ?? 0}px;
  font-size: ${(p) => p.$size ?? 22}px;
  color: ${(p) => (p.$muted ? "#7c7c7c" : "#1f1f1f")};
`;

const Label = styled.span<{ $w: number; $ls?: number; $ml?: number; $bold?: boolean }>`
  width: ${(p) => p.$w}px;
  margin-left: ${(p) => p.$ml ?? 0}px;
  flex: none;
  letter-spacing: ${(p) => p.$ls ?? 0}px;
  font-weight: ${(p) => (p.$bold ? 500 : 400)};
`;

const StatusIcon = styled.span<{ $ml: number }>`
  margin-left: ${(p) => p.$ml}px;
  flex: none;
`;

const Steps = styled.span<{ $w: number }>`
  width: ${(p) => p.$w}px;
  height: 100%;
  display: flex;
  flex-direction: column;
  align-items: center;
  justify-content: center;
  gap: 10px;
  border-left: 2px solid #b5b5b5;
`;

const Up = () => <svg width="16" height="8"><path d="M0 8H16L8 0Z" fill="#5a5a58" /></svg>;
const Down = () => <svg width="16" height="8"><path d="M0 0H16L8 8Z" fill="#5a5a58" /></svg>;

/* ---------- context menu ---------- */

const Menu = styled.ul`
  position: absolute;
  left: 418px;
  top: 12px;
  width: 508px;
  margin: 0;
  padding: 0;
  list-style: none;
  background: #fff;
  box-shadow: inset 0 0 0 2px #949494, 0 12px 44px rgba(0, 0, 0, 0.34), 0 0 3px rgba(0, 0, 0, 0.3);
`;

const Item = styled.li<{ $on?: boolean; $off?: boolean; $ls?: number }>`
  height: 48px;
  display: flex;
  align-items: center;
  padding: 0 12px 0 14px;
  font-size: 25px;
  line-height: 32px;
  letter-spacing: ${(p) => p.$ls ?? 0}px;
  color: ${(p) => (p.$on ? "#fff" : p.$off ? "#c0c0c0" : "#262626")};
  background: ${(p) => (p.$on ? "#7ea5ee" : "transparent")};
  box-shadow: ${(p) => (p.$on ? "inset 0 0 0 2px #6d94d8" : "none")};
`;

const Rule = styled.li`
  height: 4px;
  margin: 0 11px 0 9px;
  border-top: 1px solid #c0c0c0;
`;

const ItemIcon = styled.span`
  width: 32px;
  height: 32px;
  margin-right: 10px;
  flex: none;
`;

const ItemText = styled.span`
  flex: 1;
  padding-top: 1px;
  white-space: pre;
`;

const Key = styled.u`
  text-decoration-thickness: 1px;
  text-underline-offset: 4px;
  text-decoration-skip-ink: none;
`;

const MenuArt = ({ y, children }: { y: number; children: React.ReactNode }) => (
  <svg width="32" height="32" overflow="visible" viewBox={`93 ${y} 93 93`}>
    {children}
  </svg>
);

const Magnify = ({ sel }: { sel?: boolean }) => (
  <g opacity={sel ? 0.35 : 1}>
    <rect x="102" y="67" width="44" height="44" fill={sel ? "#e9dfb8" : "#e4e4e2"} stroke="#8a8a88" strokeWidth="3" />
    <path d="M130 112L98 146" stroke={sel ? "#777" : "#333"} strokeWidth="10" />
    <path d="M118 125L99 145" stroke={sel ? "#ddd" : "#f3bf2f"} strokeWidth="5" />
    <circle cx="151" cy="92" r="33" fill="#e9ebeb" fillOpacity=".93" stroke="#777" strokeWidth="3" />
    <path d="M153 72V112" stroke="#c9c9c9" strokeWidth="3" />
  </g>
);

const icons: Record<string, React.ReactNode> = {
  zoom: <MenuArt y={58}><Magnify /></MenuArt>,
  zoomSel: <MenuArt y={58}><Magnify sel /></MenuArt>,
  glasses: (
    <MenuArt y={337}>
      <path d="M94 348Q116 343 136 350H143Q162 343 186 348" fill="none" stroke="#000" strokeWidth="6" />
      <path d="M102 350Q102 377 120 376Q134 374 135 352ZM177 350Q177 377 160 376Q146 374 145 352Z" fill="#fff" stroke="#000" strokeWidth="4" />
      <Plus x={148} y={392} s={38} />
    </MenuArt>
  ),
  box: (
    <MenuArt y={476}>
      <rect x="100" y="484" width="79" height="78" fill="#fff" stroke="#b9b9b9" strokeWidth="5" />
    </MenuArt>
  ),
  label: (
    <MenuArt y={616}>
      <path d="M101 662L113 641H178V683H113Z" fill="#fce94f" stroke="#c4a000" strokeWidth="5" />
      <text x="118" y="674" fontSize="30" fill="#000" textLength="51" lengthAdjust="spacing" fontFamily="'DejaVu Sans', sans-serif">abc</text>
    </MenuArt>
  ),
  sql: (
    <MenuArt y={1034}>
      <path d="M98 1050V1110Q104 1121 140 1122Q176 1121 181 1110V1050Z" fill="#6d97c4" stroke="#3f6288" strokeWidth="3" />
      <path d="M106 1062V1112L124 1118V1066Z" fill="#92b3d8" />
      <ellipse cx="139.500" cy="1051" rx="42" ry="12" fill="#b4cbe4" stroke="#5a7390" strokeWidth="3" />
      <path d="M98 1074Q120 1084 140 1083Q166 1083 181 1072M98 1095Q120 1104 140 1103Q166 1103 181 1093" fill="none" stroke="#34506f" strokeWidth="3.5" />
    </MenuArt>
  ),
  dup: (
    <MenuArt y={1185}>
      <rect x="101" y="1204" width="66" height="66" fill="#9a9a96" stroke="#555753" strokeWidth="4" />
      <rect x="112" y="1193" width="66" height="66" fill="#eeeeec" stroke="#888a85" strokeWidth="4" />
      <Star x={145} y={1237} s={36} />
    </MenuArt>
  ),
  remove: (
    <MenuArt y={1324}>
      <rect x="101" y="1332" width="65" height="66" fill="#eeeeec" stroke="#888a85" strokeWidth="4" />
      <rect x="145" y="1381" width="35" height="30" rx="6" fill="#ef4a4a" />
      <path d="M151 1396H174" stroke="#fff" strokeWidth="8" />
    </MenuArt>
  ),
  table: (
    <MenuArt y={116}>
      <rect x="103" y="126" width="74" height="74" fill="#e9e9e9" stroke="#6f9bcb" strokeWidth="4" />
      <rect x="104" y="127" width="72" height="18" fill="#c4dcf0" />
      <path d="M103 146H177" stroke="#6f9bcb" strokeWidth="3" />
      <path d="M112 135H128M135 135H168" stroke="#6d97c4" strokeWidth="7" />
      <path d="M112 153H128M135 153H168M112 165H128M135 165H168M112 177H128M135 177H168M112 188H128M135 188H168" stroke="#6d97c4" strokeWidth="3.500" />
    </MenuArt>
  ),
  pencil: (
    <MenuArt y={255.5}>
      <path d="M143 262L165 272L133 330L113 318Z" fill="#e6cf3e" stroke="#8f8420" strokeWidth="3" />
      <path d="M152 272L122 322" stroke="#fbf0a0" strokeWidth="5" />
      <path d="M162 276L132 328" stroke="#b79f20" strokeWidth="4" />
      <path d="M143 262L148 256L170 266L165 272Z" fill="#eee" stroke="#aaa" strokeWidth="2" />
      <path d="M113 318L108 347L133 330Z" fill="#9a9a98" stroke="#666" strokeWidth="2" />
    </MenuArt>
  ),
};

type Entry = { t?: string; icon?: string; sub?: boolean; off?: boolean; on?: boolean; ls?: number; rule?: boolean };

/* An ampersand marks the mnemonic letter. */
const entries: Entry[] = [
  { t: "&Zoom to Layer(s)", icon: "zoom", ls: 0.4 },
  { t: "Zoom to &Selection", icon: "zoomSel", off: true, ls: 0.28 },
  { t: "Show in &Overview", icon: "glasses", ls: 0.22 },
  { t: "Show Feature &Count", icon: "box", ls: 0.17 },
  { t: "Show &Labels", icon: "label", ls: 0.15 },
  { t: "Copy Layer", ls: 0.15 },
  { t: "Re&name Layer", ls: 0.1 },
  { t: "Update SQL Layer…", icon: "sql", ls: 0.25 },
  { rule: true },
  { t: "&Duplicate Layer", icon: "dup", ls: 0.12 },
  { t: "&Remove Layer…", icon: "remove", ls: 0.3 },
  { rule: true },
  { t: "Move to &Top", ls: 0.45 },
  { rule: true },
  { t: "Open &Attribute Table", icon: "table", ls: 0.38 },
  { t: "Toggle &Editing", icon: "pencil", ls: 0.4 },
  { t: "&Filter…", ls: 0.1 },
  { t: "C&hange Data Source…" },
  { rule: true },
  { t: "Set Layer Scale &Visibility…", ls: 0.04 },
  { t: "Layer CRS", sub: true },
  { rule: true },
  { t: "E&xport", sub: true },
  { rule: true },
  { t: "Styles", sub: true, ls: 0.3 },
  { t: "Add Layer Notes…", ls: 0.06 },
  { t: "&Properties…", on: true },
];

const Mnemonic = ({ text }: { text: string }) => {
  const i = text.indexOf("&");
  if (i < 0) return <ItemText>{text}</ItemText>;
  return (
    <ItemText>
      {text.slice(0, i)}
      <Key>{text[i + 1]}</Key>
      {text.slice(i + 2)}
    </ItemText>
  );
};

export default function App() {
  return (
    <Desktop>
      <Global />
      <Window>
        <TitleBar>
          <Light $fill="#ed6a5e" $rim="#d5574c" />
          <Light $fill="#f5bf4f" $rim="#d9a23c" />
          <Light $fill="#61c554" $rim="#4fa943" />
          <Title>*Untitled Project — QGIS</Title>
        </TitleBar>

        <Bar $h={75} $pad={1}>
          <Section $w={1517}>
            <Grip />
            <RowOneLeft />
            <Overflow $w={494} />
            <RowOneView />
          </Section>
          <Section $w={367}>
            <Grip />
            <RowOneSelect />
          </Section>
          <Section $w={676}>
            <Grip />
            <RowOneTools />
          </Section>
        </Bar>

        <Bar $h={78} $pad={2}>
          <Section $w={1371}>
            <Grip />
            <RowTwoLeft />
            <Overflow $w={480} />
            <RowTwoEdit />
          </Section>
          <Section $w={653}>
            <Grip />
            <RowTwoLabels />
          </Section>
          <Section $w={164}>
            <Grip />
            <RowTwoWeb />
          </Section>
          <Section $w={164}>
            <Grip />
            <RowTwoPlugins />
          </Section>
          <Section $w={98}>
            <Grip />
            <RowTwoHelp />
          </Section>
          <Section $w={110}>
            <Grip />
          </Section>
        </Bar>

        <Body>
          <Dock>
            <DockTitle>Layers</DockTitle>
            <DockTools>
              <LayerIcon c={32}>
                <path d="M60 848L96 856L90 874L60 868Z" fill="#f8e36a" />
                <path d="M58 864L90 870L84 888L54 882Z" fill="#7ba6d8" />
                <path d="M52 880L84 884L100 910L60 902Z" fill="#ef3d34" />
                <path d="M86 870L106 862L118 876L114 896L98 911Q84 900 76 888Z" fill="#e0a860" stroke="#a9702c" strokeWidth="3" />
                <path d="M110 872L136 848" stroke="#c98d3f" strokeWidth="8" strokeLinecap="round" />
              </LayerIcon>
              <LayerIcon c={82}>
                <path d="M206 884V914H240M218 872H216V902H246" fill="none" stroke="#8a8a88" strokeWidth="4" />
                <path d="M218 854H266V902H218ZM232 842H280V890" fill="none" stroke="#8a8a88" strokeWidth="4" />
                <path d="M240 876V850Q240 832 249 832Q256 834 256 846V884Q254 892 246 890Q242 888 242 880" fill="none" stroke="#3f6d9c" strokeWidth="4.500" />
                <Plus x={252} y={888} s={36} />
              </LayerIcon>
              <LayerIcon c={132}>
                <path d="M354 858Q394 838 438 862" fill="none" stroke="#9a9a98" strokeWidth="4" />
                <path d="M354 882Q396 838 442 886Q396 926 354 882Z" fill="#f4f4f4" stroke="#8f8f8d" strokeWidth="4" />
                <circle cx="396" cy="878" r="18" fill="#7fa8dc" stroke="#4b6c94" strokeWidth="3" />
                <circle cx="396" cy="876" r="9" fill="#111" />
                <path d="M422 909H455L438 925Z" fill="#5a5a58" />
              </LayerIcon>
              <LayerIcon c={182}>
                <path d="M508 850H584L556 884V914L538 920V884Z" fill="#6d97c4" stroke="#40648a" strokeWidth="4" />
                <rect x="508" y="834" width="76" height="15" fill="#fce94f" stroke="#40648a" strokeWidth="4" />
                <path d="M572 909H604L588 925Z" fill="#5a5a58" />
              </LayerIcon>
              <LayerIcon c={232} gap={12}>
                <text x="656" y="890" fontSize="124" fontWeight="700" fill="#5c3566" textLength="52" lengthAdjust="spacingAndGlyphs" fontFamily="'Liberation Serif', serif">ε</text>
                <path d="M702 882H742V900L732 908V922H712V908L702 900Z" fill="#a0a09e" stroke="#999" strokeWidth="3" />
                <path d="M706 890L714 904V920M738 890L730 904" fill="none" stroke="#d8d8d6" strokeWidth="6" />
              </LayerIcon>
              <CaretBox $w={16}>
                <svg width="16" height="32"><path d="M0 12H16L8 20Z" fill="#5a5a58" /></svg>
              </CaretBox>
              <DockTool $gap={-17} />
              <LayerIcon c={307}><TreeArrow x={877} /></LayerIcon>
              <LayerIcon c={357}><TreeArrow x={1027} up /></LayerIcon>
              <LayerIcon c={407}>
                <rect x="1178" y="837" width="68" height="66" fill="#f0f0ee" stroke="#8f8f8d" strokeWidth="4" />
                <rect x="1225" y="888" width="36" height="28" rx="6" fill="#e04848" />
                <path d="M1231 902H1256" stroke="#fff" strokeWidth="7" />
              </LayerIcon>
            </DockTools>
            <Tree>
              <TreeRow>
                <TableMark>
                  <svg width="28" height="32">
                    <rect x="1" y="1" width="26" height="30" rx="2" fill="#e8e8e6" stroke="#8a8c86" strokeWidth="2" />
                    <path d="M1 9H27" stroke="#8a8c86" strokeWidth="1.500" />
                    <path d="M4 5H10M14 5H24M4 14.500H10M14 14.500H24M4 20H10M14 20H24M4 26H10M14 26H24" stroke="#83857f" strokeWidth="1.800" />
                  </svg>
                </TableMark>
                <TreeName>us-states-20221009</TreeName>
              </TreeRow>
              <TreeRow $on>
                <CheckBox $ml={46}><Check /></CheckBox>
                <Swatch />
                <TreeName $on>cb_2018_us_state_500k</TreeName>
              </TreeRow>
            </Tree>
          </Dock>
          <Splitter />
          <Canvas>
            <MapView />
          </Canvas>
        </Body>

        <Status>
          <Field $w={428} $h={48}>
            <StatusIcon $ml={15}>
              <svg width="26" height="26">
                <circle cx="10" cy="10" r="8" fill="none" stroke="#8a8a8a" strokeWidth="2.200" />
                <path d="M15.500 15.500L24 24" stroke="#8a8a8a" strokeWidth="2.800" />
              </svg>
            </StatusIcon>
            <FieldText $pl={15} $size={25} $ls={0.25} $muted>Type to locate (⌘K)</FieldText>
          </Field>
          <Label $w={121} $ml={363} $ls={0.15}>Coordinate</Label>
          <Field $w={242} $h={44} $up={2}>
            <FieldText $pl={12} $ls={0.5}>-4970235,3752924</FieldText>
          </Field>
          <StatusIcon $ml={8}>
            <svg width="32" height="32">
              <g stroke="#000" strokeWidth="2.200" fill="#e9dede">
                <ellipse cx="11" cy="10" rx="6" ry="9" transform="rotate(-25 11 10)" fill="#aaa" />
                <path d="M7 4L15 15M12 2L19 13" fill="none" />
                <path d="M9 20Q14 12 21 14Q28 18 26 26Q20 33 13 29Q8 25 9 20Z" />
                <ellipse cx="19" cy="23" rx="4" ry="5" fill="#fff" />
                <path d="M2 16L8 20M3 22L9 24" fill="none" />
              </g>
              <path d="M20 3L28 1M23 9L29 5" stroke="#000" strokeWidth="2" strokeDasharray="2 2" />
            </svg>
          </StatusIcon>
          <Label $w={65} $ml={26} $ls={0.2} $bold>Scale</Label>
          <Field $w={185} $h={48}>
            <FieldText $pl={6} $ls={0.5}>1:88660312</FieldText>
            <Steps $w={39}><svg width="16" height="9"><path d="M0 0H16L8 9Z" fill="#5a5a58" /></svg></Steps>
          </Field>
          <StatusIcon $ml={23}>
            <svg width="26" height="32">
              <path d="M6 16V9Q6 2 13 2Q20 2 20 9V16" fill="none" stroke="#8c8c8a" strokeWidth="3.500" />
              <rect x="0" y="14" width="26" height="17" rx="3" fill="#666" />
            </svg>
          </StatusIcon>
          <Label $w={106} $ml={18} $bold>Magnifier</Label>
          <Field $w={182} $h={46}>
            <FieldText $pl={8} $ls={0.3}>100%</FieldText>
            <Steps $w={30}><Up /><Down /></Steps>
          </Field>
          <Label $w={106} $ml={18} $ls={0.4}>Rotation</Label>
          <Field $w={186} $h={44} $up={2}>
            <FieldText $pl={8} $ls={0.4}>0.0 °</FieldText>
            <Steps $w={30}><Up /><Down /></Steps>
          </Field>
          <CheckBox $ml={12}><Check /></CheckBox>
          <Label $w={105} $ml={11} $ls={0.1}>Render</Label>
          <StatusIcon $ml={0}>
            <svg width="32" height="28" fill="none" stroke="#666" strokeWidth="2">
              <ellipse cx="16" cy="14" rx="10" ry="12.500" />
              <ellipse cx="16" cy="14" rx="4.500" ry="12.500" />
              <ellipse cx="16" cy="13.500" rx="14.500" ry="3.500" />
              <path d="M8 8H24M8 20H24" />
            </svg>
          </StatusIcon>
          <Label $w={178} $ml={4} $ls={0.2} $bold>ESRI:102004</Label>
          <StatusIcon $ml={0}>
            <svg width="34" height="32">
              <ellipse cx="17" cy="13.500" rx="16" ry="12.500" fill="#666" />
              <path d="M18 22Q24 30 31 30Q26 26 28 20Z" fill="#666" />
            </svg>
          </StatusIcon>
        </Status>
      </Window>

      <Menu>
        {entries.map((e, i) =>
          e.rule ? (
            <Rule key={i} />
          ) : (
            <Item key={i} $on={e.on} $off={e.off} $ls={e.ls}>
              <ItemIcon>{e.icon ? icons[e.icon] : null}</ItemIcon>
              <Mnemonic text={e.t!} />
              {e.sub && (
                <svg width="8" height="16"><path d="M0 0V16L8 8Z" fill="#5a5a5a" /></svg>
              )}
            </Item>
          )
        )}
      </Menu>
    </Desktop>
  );
}
